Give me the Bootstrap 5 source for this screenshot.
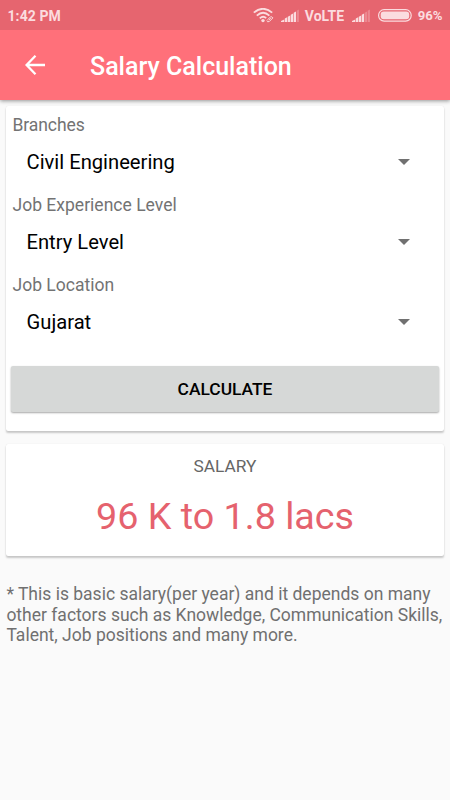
<!DOCTYPE html>
<html lang="en">
<head>
<meta charset="utf-8">
<meta name="viewport" content="width=device-width, initial-scale=1">
<title>Salary Calculation</title>
<link href="https://cdn.jsdelivr.net/npm/bootstrap@5.3.0/dist/css/bootstrap.min.css" rel="stylesheet">
<style>
body{font-family:Roboto,sans-serif;background:#fafafa;color:#000;min-height:800px;overflow:hidden}
.status-bar{height:30px;background:#e6656f;color:#fbdcdf;padding:1px 8px 0 7.5px;font-size:14px;font-weight:700;line-height:1;z-index:3}
.clock{letter-spacing:.08px}
.status-bar .volte{margin:0 8px 0 5px}
.status-bar .percent{font-size:13.2px;margin:0 -.6px 0 5.6px}
.cell-signal{margin-left:6px}
.battery{margin-left:7px}
.app-bar{height:70px;background:#ff707a;padding:0 0 0 23px;box-shadow:0 1px 4px rgba(0,0,0,.42);z-index:2}
.app-bar h1{font-size:25px;font-weight:500;margin:3px 0 0 43px;line-height:30px}
.page-body{padding:6px 6px 0}
.panel{background:#fff;border-radius:2px;box-shadow:0 2px 2px rgba(0,0,0,.2),0 0 1px rgba(0,0,0,.12)}
.form-panel{height:325px;padding:9px 5px 0}
.field{height:80px;padding-left:1.5px}
.field-name{font-size:17.55px;line-height:20px;color:#737373}
.field-name .short{letter-spacing:-.1px}
.picker{height:54px;padding:0 29px 0 14px;font-size:20.2px}
.calc{height:46px;margin-top:11px;padding:1px 0 0;background:#d6d8d7;color:#000;border:0;border-radius:2px;font-size:17.4px;font-weight:500;box-shadow:0 1px 2px rgba(0,0,0,.35)}
.result-panel{height:112px;margin-top:13px;padding-top:12px}
.result-name{font-size:17.3px;line-height:21px;color:#666}
.result-value{font-size:37.7px;line-height:44px;margin-top:17px;color:#e5626e}
.hint{margin:28px 0 0;padding-left:.4px;font-size:17.5px;line-height:20.7px;color:#707070;white-space:nowrap}
</style>
</head>
<body>
<div class="status-bar d-flex align-items-center position-relative">
  <span class="clock">1:42 PM</span>
  <svg class="ms-auto" width="22" height="16" viewBox="0 0 22 16" fill="none" stroke="#fbdcdf" stroke-width="1.8">
    <path d="M.8 4.6Q10-3 19.2 4.6M3.8 7.6Q10 2 16.4 7.6M6.8 10.4Q10 7.3 13.2 10.1"/>
    <circle cx="10" cy="12.6" r="1.7" fill="#fbdcdf" stroke="none"/>
    <path d="M14.3 12l3.1-3q1.8-.8 2.5.9l-3.6 3.6q-2 1-2.6-.9M15.8 12l2-1.8" stroke-width="1"/>
  </svg>
  <svg class="cell-signal" width="19" height="14" viewBox="0 0 19 14" fill="#fbdcdf">
    <path d="M0 13v-1l3.2-1.5V13zM3.8 13V9.5l2.4-1.2V13zM6.8 13V7.8l2.4-1.4V13zM9.8 13V5.8l2.3-1.4V13zM12.7 13V3.8l2.3-1.4V13z"/><path d="M15.7 13V1.8l2.2-1.4V13z" opacity=".3"/>
  </svg>
  <span class="volte">VoLTE</span>
  <svg width="19" height="14" viewBox="0 0 19 14" fill="#fbdcdf">
    <path d="M0 13v-1l3.2-1.5V13zM3.8 13V9.5l2.4-1.2V13zM6.8 13V7.8l2.4-1.4V13zM9.8 13V5.8l2.3-1.4V13z"/><path d="M12.7 13V3.8l2.3-1.4V13zM15.7 13V1.8l2.2-1.4V13z" opacity=".3"/>
  </svg>
  <svg class="battery" width="34" height="13" viewBox="0 0 34 13">
    <rect x=".6" y=".7" width="32.6" height="11.4" rx="5.5" fill="none" stroke="#fbdcdf" stroke-width="1.2"/><rect x="2.7" y="2.5" width="28.5" height="7.8" rx="3" fill="#fbdcdf"/>
  </svg>
  <span class="percent">96%</span>
</div>
<header class="app-bar d-flex align-items-center text-white position-relative">
  <svg width="24" height="24" viewBox="0 0 24 24" fill="none" stroke="#fff" stroke-width="2.3"><path d="M22 12H4M12.5 2.8L3.6 12l8.9 9.2"/></svg>
  <h1>Salary Calculation</h1>
</header>
<main class="page-body">
  <section class="panel form-panel">
    <div class="field">
      <div class="field-name"><span class="short">Branches</span></div>
      <div class="picker d-flex align-items-center justify-content-between"><span>Civil Engineering</span><svg width="12" height="6" viewBox="0 0 12 6"><path d="M0 0h12L6 6z" fill="#707070"/></svg></div>
    </div>
    <div class="field">
      <div class="field-name">Job Experience Level</div>
      <div class="picker d-flex align-items-center justify-content-between"><span>Entry Level</span><svg width="12" height="6" viewBox="0 0 12 6"><path d="M0 0h12L6 6z" fill="#707070"/></svg></div>
    </div>
    <div class="field">
      <div class="field-name">Job Location</div>
      <div class="picker d-flex align-items-center justify-content-between"><span>Gujarat</span><svg width="12" height="6" viewBox="0 0 12 6"><path d="M0 0h12L6 6z" fill="#707070"/></svg></div>
    </div>
    <button class="btn calc w-100 d-block" type="button">CALCULATE</button>
  </section>
  <section class="panel result-panel text-center">
    <div class="result-name">SALARY</div>
    <div class="result-value">96 K to 1.8 lacs</div>
  </section>
  <p class="hint">* This is basic salary(per year) and it depends on many<br>other factors such as Knowledge, Communication Skills,<br>Talent, Job positions and many more.</p>
</main>
<script src="https://cdn.jsdelivr.net/npm/bootstrap@5.3.0/dist/js/bootstrap.bundle.min.js"></script>
</body>
</html>
